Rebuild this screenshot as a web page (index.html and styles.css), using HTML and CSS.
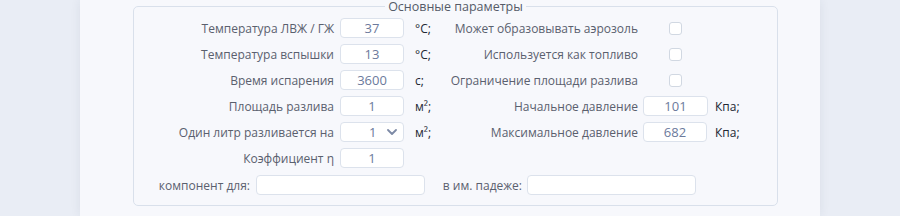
FILE: index.html
```html
<!DOCTYPE html>
<html lang="ru">
<head>
    <meta charset="UTF-8">
    <title>Основные параметры</title>
    <link rel="stylesheet" href="styles.css">
</head>
<body>
    <div class="page">
        <fieldset class="params">
            <legend>Основные параметры</legend>

            <div class="row">
                <label class="lbl">Температура ЛВЖ / ГЖ</label>
                <input class="num" type="text" value="37">
                <span class="unit">°C;</span>
                <label class="lbl">Может образовывать аэрозоль</label>
                <span class="check-cell"><input type="checkbox"></span>
            </div>
            <div class="row">
                <label class="lbl">Температура вспышки</label>
                <input class="num" type="text" value="13">
                <span class="unit">°C;</span>
                <label class="lbl">Используется как топливо</label>
                <span class="check-cell"><input type="checkbox"></span>
            </div>
            <div class="row">
                <label class="lbl">Время испарения</label>
                <input class="num" type="text" value="3600">
                <span class="unit">с;</span>
                <label class="lbl">Ограничение площади разлива</label>
                <span class="check-cell"><input type="checkbox"></span>
            </div>
            <div class="row">
                <label class="lbl">Площадь разлива</label>
                <input class="num" type="text" value="1">
                <span class="unit">м²;</span>
                <label class="lbl">Начальное давление</label>
                <input class="num" type="text" value="101">
                <span class="unit">Кпа;</span>
            </div>
            <div class="row">
                <label class="lbl">Один литр разливается на</label>
                <div class="select">
                    <span>1</span>
                    <svg width="10" height="6" viewBox="0 0 10 6"><path d="M1 1l4 4 4-4" fill="none" stroke="#7d8aa6" stroke-width="1.8" stroke-linecap="round" stroke-linejoin="round"/></svg>
                </div>
                <span class="unit">м²;</span>
                <label class="lbl">Максимальное давление</label>
                <input class="num" type="text" value="682">
                <span class="unit">Кпа;</span>
            </div>
            <div class="row">
                <label class="lbl">Коэффициент η</label>
                <input class="num" type="text" value="1">
            </div>

            <div class="names">
                <label class="lbl">компонент для:</label>
                <input class="wide" type="text">
                <label class="lbl">в им. падеже:</label>
                <input class="wide" type="text">
            </div>
        </fieldset>
    </div>
</body>
</html>
```

FILE: styles.css
```css
body {
    margin: 0;
    background-color: #e9edf5;
    font-family: "Open Sans", "Noto Sans", sans-serif;
    font-size: 12px;
    color: #5a606e;
}

.page {
    width: 740px;
    height: 216px;
    margin-left: 80px;
    box-sizing: border-box;
    background-color: #f7f8fc;
    box-shadow: 0 0 10px rgba(40, 50, 80, 0.08);
    overflow: hidden;
}

.params {
    width: 645px;
    box-sizing: border-box;
    margin: 0 0 0 53px;
    padding: 5px 0 10px 0;
    border: 1px solid #d9e0eb;
    border-radius: 5px;
}

.params legend {
    margin: 0 auto;
    padding: 0 3px;
    color: #555b68;
    font-size: 12.5px;
    line-height: 13px;
}

.row {
    display: grid;
    grid-template-columns: 206px 64px 36px 203px 65px auto;
    align-items: center;
    height: 20px;
    margin-bottom: 6px;
}

.lbl {
    text-align: right;
    white-space: nowrap;
    padding-right: 6px;
}

.row .lbl:nth-of-type(2) {
    padding-right: 5px;
}

.num, .wide {
    height: 20px;
    box-sizing: border-box;
    border: 1px solid #dce2ec;
    border-radius: 4px;
    background-color: #fff;
    font-family: inherit;
    font-size: 13px;
    color: #6c7a9c;
    padding: 0 4px;
    outline: none;
}

.num {
    width: 64px;
    text-align: center;
}

.row .num:nth-of-type(2) {
    width: 65px;
}

.unit {
    color: #222733;
    padding-left: 11px;
    white-space: nowrap;
}

.row .unit:nth-of-type(2) {
    padding-left: 7px;
}

.check-cell {
    display: flex;
    justify-content: center;
}

.check-cell input {
    appearance: none;
    width: 13px;
    height: 13px;
    margin: 0;
    border: 1px solid #d1d8e2;
    border-radius: 3px;
    background-color: #fff;
}

.select {
    width: 64px;
    height: 20px;
    box-sizing: border-box;
    border: 1px solid #dce2ec;
    border-radius: 4px;
    background-color: #fff;
    color: #6c7a9c;
    font-size: 13px;
    display: flex;
    align-items: center;
    padding: 0 6px 0 28px;
}

.select span {
    flex-grow: 1;
}

.names {
    display: grid;
    grid-template-columns: 122px 169px 102px 169px;
    align-items: center;
    margin-top: 7px;
}

.names .lbl:nth-of-type(2) {
    padding-right: 5px;
}

.wide {
    width: 169px;
}
```
